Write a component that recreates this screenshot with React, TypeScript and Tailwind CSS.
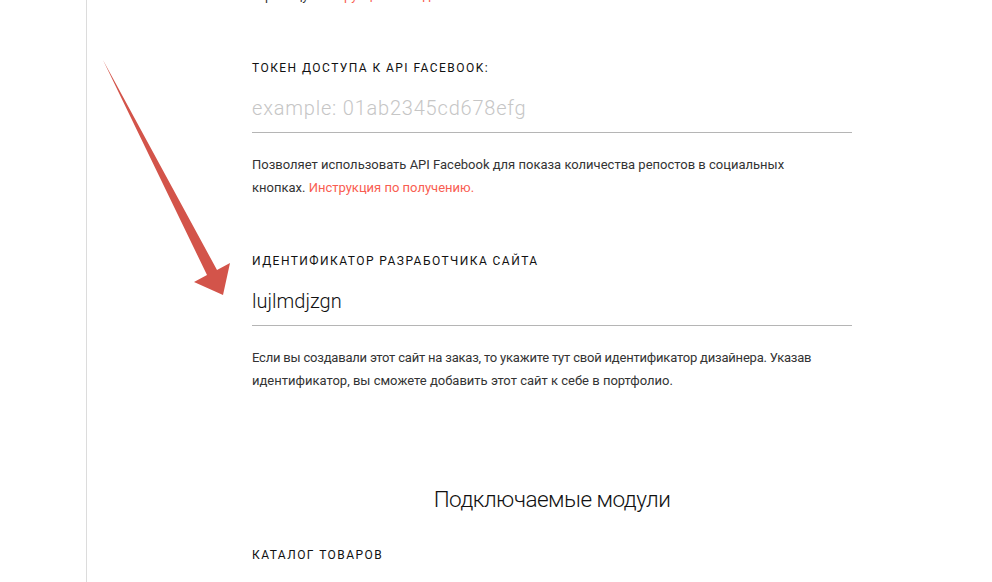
import React from "react";

const font = { fontFamily: "Roboto, 'Noto Sans', sans-serif" };

function Field({
  label,
  placeholder,
  value,
  children,
}: {
  label: string;
  placeholder?: string;
  value?: string;
  children: React.ReactNode;
}) {
  return (
    <div className="w-[600px]">
      <div className="text-[12px] leading-[16px] tracking-[1.45px] uppercase text-[#111]">{label}</div>
      <input
        readOnly
        defaultValue={value}
        placeholder={placeholder}
        className="mt-[12px] block w-full h-[45px] pb-[4px] border-b border-[#b5b5b5] bg-transparent outline-none text-[20px] font-light text-[#111] placeholder:text-[#c6c6c6] placeholder:tracking-[0.8px]"
        style={font}
      />
      <div className="mt-[20px] text-[13px] leading-[23px] text-[#333] whitespace-nowrap">{children}</div>
    </div>
  );
}

export default function App() {
  return (
    <div className="relative h-[582px] w-[992px] overflow-hidden bg-white" style={font}>
      <div className="flex h-full">
        {/* left rail */}
        <div className="w-[87px] shrink-0 border-r border-[#dcdcdc]" />

        {/* settings column */}
        <div className="pl-[165px] flex flex-col">
          <p className="-mt-[16px] text-[13px] leading-[23px] text-[#333]">
            страницу.{" "}
            <span className="text-[#f95d51]">Инструкция по подключению</span>
          </p>

          <div className="mt-[53px]">
            <Field label="Токен доступа к API Facebook:" placeholder="example: 01ab2345cd678efg">
              Позволяет использовать API Facebook для показа количества репостов в социальных
              <br />
              кнопках. <span className="text-[#f95d51]">Инструкция по получению.</span>
            </Field>
          </div>

          <div className="mt-[54px]">
            <Field label="Идентификатор разработчика сайта" value="lujlmdjzgn">
              <span className="tracking-[-0.2px]">
                Если вы создавали этот сайт на заказ, то укажите тут свой идентификатор дизайнера. Указав
              </span>
              <br />
              идентификатор, вы сможете добавить этот сайт к себе в портфолио.
            </Field>
          </div>

          <h2 className="mt-[91px] w-[600px] text-center text-[22.5px] leading-[32px] tracking-[-0.5px] font-light text-[#111]">
            Подключаемые модули
          </h2>

          <div className="mt-[32px] text-[12px] leading-[16px] tracking-[1.45px] uppercase text-[#111]">
            Каталог товаров
          </div>
        </div>
      </div>

      {/* annotation arrow */}
      <svg className="absolute left-0 top-0 pointer-events-none" width="992" height="582" viewBox="0 0 992 582">
        <polygon
          points="103,60 217,270 230,263 223,295 194,282 207,275"
          fill="#d3544a"
        />
      </svg>
    </div>
  );
}
